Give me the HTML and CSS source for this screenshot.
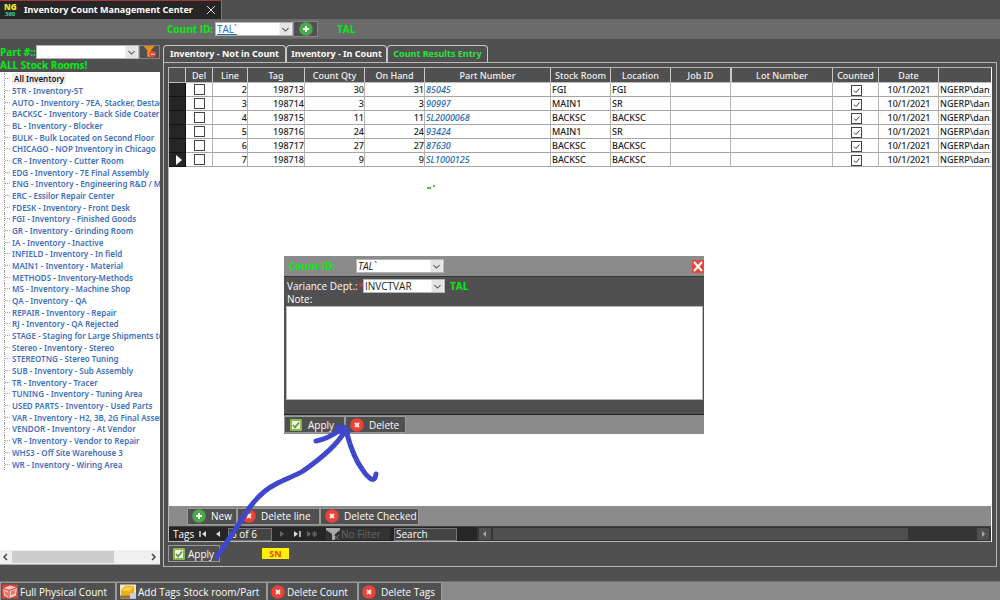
FILE: index.html
```html
<!DOCTYPE html>
<html lang="en">
<head>
<meta charset="utf-8">
<title>Inventory Count Management Center</title>
<link rel="stylesheet" href="styles.css">
</head>
<body>
<svg class="defs" aria-hidden="true">
  <symbol id="i-chev" viewBox="0 0 14 14"><path d="M0 0h14v14H0z" fill="#e4e4e4"/><path d="M3.500 6l3.500 3.500L10.500 6" fill="none" stroke="#555" stroke-width="1.200"/></symbol>
  <symbol id="i-plus" viewBox="0 0 14 14"><circle cx="7" cy="7" r="6.800" fill="#4aa84f"/><path d="M7 4v6M4 7h6" stroke="#eaffea" stroke-width="2"/></symbol>
  <symbol id="i-del" viewBox="0 0 14 14"><circle cx="7" cy="7" r="6.800" fill="#ea4438"/><path d="M5 5l4 4M9 5l-4 4" stroke="#ffe9e6" stroke-width="2"/></symbol>
  <symbol id="i-ok" viewBox="0 0 14 14"><rect x="1" y="1" width="12" height="12" rx="1" fill="#86b84c"/><rect x="3" y="3" width="8" height="8" fill="#eef6e2"/><path d="M4 7l2 2.500L10 4.500" fill="none" stroke="#5d9437" stroke-width="1.700"/></symbol>
  <symbol id="i-box" viewBox="0 0 16 14"><path d="M0 0h16v14H0z" fill="#d8463b"/><path d="M1 4l7-3 7 2-1 8-7 3-5-3z" fill="#f6c9c2"/><path d="M1 4l6 2 8-3M7 6v8" fill="none" stroke="#c23a31"/><path d="M2 6l4 2v4L3 10zM9 7l4-2v4l-4 2z" fill="#e4776c"/></symbol>
  <symbol id="i-tags" viewBox="0 0 16 14"><path d="M0 0h16v14H0z" fill="#efe6c4"/><path d="M1 6l5-5 8 1v7l-5 3-8-1z" fill="#f0ac12"/><path d="M2 6l5-4 6 1-4 4z" fill="#ffd04c"/><path d="M0 11h10v3H0z" fill="#8a7440"/><path d="M10 9l6-1v6h-6z" fill="#c9ced2"/></symbol>
</svg>
<div class="app">
  <header class="titlebar">
    <div class="doc-tab">
      <svg class="logo" viewBox="0 0 14 14" aria-hidden="true"><text class="logo-a" x="0" y="7">NG</text><text class="logo-b" x="1" y="13">360</text></svg>
      <span>Inventory Count Management Center</span>
      <button class="close" aria-label="Close tab"><svg viewBox="0 0 10 10"><path d="M1 1l8 8M9 1l-8 8" stroke="#ddd" fill="none"/></svg></button>
    </div>
  </header>

  <div class="count-bar">
    <label class="green" for="count">Count ID:</label>
    <div class="combo combo-count"><select id="count" class="linkish"><option>TAL`</option></select><svg><use href="#i-chev"/></svg></div>
    <button class="icon-btn" aria-label="Add count"><svg><use href="#i-plus"/></svg></button>
    <span class="green count-name">TAL</span>
  </div>

  <main class="work">
    <aside class="side">
      <div class="part-row">
        <label class="green" for="part">Part #::</label>
        <div class="combo combo-part"><select id="part"><option></option></select><svg><use href="#i-chev"/></svg></div>
        <button class="filter-btn" aria-label="Clear filter"><svg viewBox="0 0 14 13"><path d="M0 0h12L8 5v7H4V5z" fill="#ee8b14"/><circle cx="10" cy="9" r="3.500" fill="#e5443a"/><path d="M8 9h4" stroke="#fff"/></svg></button>
      </div>
      <div class="green rooms-title">ALL Stock Rooms!</div>
      <div class="tree">
        <ul>
          <li class="current"><span>All Inventory</span></li>
          <li>5TR - Inventory-5T</li>
          <li>AUTO - Inventory - 7EA, Stacker, Destac</li>
          <li>BACKSC - Inventory - Back Side Coater</li>
          <li>BL - Inventory - Blocker</li>
          <li>BULK - Bulk Located on Second Floor</li>
          <li>CHICAGO - NOP Inventory in Chicago</li>
          <li>CR - Inventory - Cutter Room</li>
          <li>EDG - Inventory - 7E Final Assembly</li>
          <li>ENG - Inventory - Engineering R&amp;D / M</li>
          <li>ERC - Essilor Repair Center</li>
          <li>FDESK - Inventory - Front Desk</li>
          <li>FGI - Inventory - Finished Goods</li>
          <li>GR - Inventory - Grinding Room</li>
          <li>IA - Inventory - Inactive</li>
          <li>INFIELD - Inventory - In field</li>
          <li>MAIN1 - Inventory - Material</li>
          <li>METHODS - Inventory-Methods</li>
          <li>MS - Inventory - Machine Shop</li>
          <li>QA - Inventory - QA</li>
          <li>REPAIR - Inventory - Repair</li>
          <li>RJ - Inventory - QA Rejected</li>
          <li>STAGE - Staging for Large Shipments to</li>
          <li>Stereo - Inventory - Stereo</li>
          <li>STEREOTNG - Stereo Tuning</li>
          <li>SUB - Inventory - Sub Assembly</li>
          <li>TR - Inventory - Tracer</li>
          <li>TUNING - Inventory - Tuning Area</li>
          <li>USED PARTS - Inventory - Used Parts</li>
          <li>VAR - Inventory - H2, 3B, 2G Final Assem</li>
          <li>VENDOR - Inventory - At Vendor</li>
          <li>VR - Inventory - Vendor to Repair</li>
          <li>WHS3 - Off Site Warehouse 3</li>
          <li>WR - Inventory - Wiring Area</li>
        </ul>
        <div class="hscroll">
          <svg viewBox="0 0 12 14"><path d="M7 4L4 7l3 3" fill="none" stroke="#444" stroke-width="1.500"/></svg>
          <div class="hthumb"></div>
          <svg viewBox="0 0 12 14"><path d="M4 4l3 3-3 3" fill="none" stroke="#444" stroke-width="1.500"/></svg>
        </div>
      </div>
    </aside>

    <section class="results">
      <nav class="tabs">
        <button class="tab-a">Inventory - Not in Count</button>
        <button class="tab-b">Inventory - In Count</button>
        <button class="tab-b active">Count Results Entry</button>
      </nav>
      <div class="panel">
        <div class="grid-box">
          <div class="sheet">
            <table>
              <colgroup><col class="w17"><col class="w27"><col class="w35"><col class="w57"><col class="w60"><col class="w60"><col><col class="w60"><col class="w60"><col class="w60"><col class="w102"><col class="w46"><col class="w60"><col class="w52"></colgroup>
              <thead><tr><th></th><th>Del</th><th>Line</th><th>Tag</th><th>Count Qty</th><th>On Hand</th><th>Part Number</th><th>Stock Room</th><th>Location</th><th>Job ID</th><th class="dbl">Lot Number</th><th>Counted</th><th>Date</th><th></th></tr></thead>
              <tbody>
                <tr><td class="sel"></td><td class="c"><input type="checkbox" aria-label="Delete line 2"></td><td class="n">2</td><td class="n">198713</td><td class="n">30</td><td class="n">31</td><td class="part">85045</td><td>FGI</td><td>FGI</td><td></td><td></td><td class="c low"><input type="checkbox" checked aria-label="Counted line 2"></td><td class="c">10/1/2021</td><td>NGERP\dan</td></tr>
                <tr><td class="sel"></td><td class="c"><input type="checkbox" aria-label="Delete line 3"></td><td class="n">3</td><td class="n">198714</td><td class="n">3</td><td class="n">3</td><td class="part">90997</td><td>MAIN1</td><td>SR</td><td></td><td></td><td class="c low"><input type="checkbox" checked aria-label="Counted line 3"></td><td class="c">10/1/2021</td><td>NGERP\dan</td></tr>
                <tr><td class="sel"></td><td class="c"><input type="checkbox" aria-label="Delete line 4"></td><td class="n">4</td><td class="n">198715</td><td class="n">11</td><td class="n">11</td><td class="part">SL2000068</td><td>BACKSC</td><td>BACKSC</td><td></td><td></td><td class="c low"><input type="checkbox" checked aria-label="Counted line 4"></td><td class="c">10/1/2021</td><td>NGERP\dan</td></tr>
                <tr><td class="sel"></td><td class="c"><input type="checkbox" aria-label="Delete line 5"></td><td class="n">5</td><td class="n">198716</td><td class="n">24</td><td class="n">24</td><td class="part">93424</td><td>MAIN1</td><td>SR</td><td></td><td></td><td class="c low"><input type="checkbox" checked aria-label="Counted line 5"></td><td class="c">10/1/2021</td><td>NGERP\dan</td></tr>
                <tr><td class="sel"></td><td class="c"><input type="checkbox" aria-label="Delete line 6"></td><td class="n">6</td><td class="n">198717</td><td class="n">27</td><td class="n">27</td><td class="part">87630</td><td>BACKSC</td><td>BACKSC</td><td></td><td></td><td class="c low"><input type="checkbox" checked aria-label="Counted line 6"></td><td class="c">10/1/2021</td><td>NGERP\dan</td></tr>
                <tr><td class="sel"><svg class="ptr" viewBox="0 0 6 10"><path d="M0 0l6 5-6 5z" fill="#fff"/></svg></td><td class="c"><input type="checkbox" aria-label="Delete line 7"></td><td class="n">7</td><td class="n">198718</td><td class="n">9</td><td class="n">9</td><td class="part">SL1000125</td><td>BACKSC</td><td>BACKSC</td><td></td><td></td><td class="c low"><input type="checkbox" checked aria-label="Counted line 7"></td><td class="c">10/1/2021</td><td>NGERP\dan</td></tr>
              </tbody>
            </table>
          </div>
          <div class="actions">
            <button class="btn b-new"><svg><use href="#i-plus"/></svg>New</button>
            <button class="btn b-line"><svg><use href="#i-del"/></svg>Delete line</button>
            <button class="btn b-checked"><svg><use href="#i-del"/></svg>Delete Checked</button>
          </div>
          <div class="recnav">
            <span class="tags-label">Tags</span>
            <button aria-label="First"><svg viewBox="0 0 10 8"><path d="M2 1v6" stroke="#ddd" stroke-width="1.500"/><path d="M8 1v6L4 4z" fill="#ddd"/></svg></button>
            <button aria-label="Previous"><svg viewBox="0 0 10 8"><path d="M7 1v6L3 4z" fill="#ddd"/></svg></button>
            <input class="pos" aria-label="Record" value="6 of 6">
            <button aria-label="Next"><svg viewBox="0 0 10 8"><path d="M3 1v6l4-3z" fill="#666"/></svg></button>
            <button aria-label="Last"><svg viewBox="0 0 10 8"><path d="M8 1v6" stroke="#ddd" stroke-width="1.500"/><path d="M2 1v6l4-3z" fill="#ddd"/></svg></button>
            <button aria-label="New record"><svg viewBox="0 0 10 8"><path d="M0 1v6l4-3z" fill="#666"/><path d="M7.500 1v6M5 4h5M5.500 2l4 4M9.500 2l-4 4" stroke="#666"/></svg></button>
            <button class="nofilter"><svg viewBox="0 0 14 12"><path d="M0 0h14v2L9 6v6H6V6L0 2z" fill="#aaa"/><path d="M8 7l5 5M13 7l-5 5" stroke="#777"/></svg>No Filter</button>
            <input class="search" aria-label="Search" value="Search">
            <div class="nav-scroll">
              <svg viewBox="0 0 12 12"><path d="M0 0h12v12H0z" fill="#505050"/><path d="M7 3v6L4 6z" fill="#aaa"/></svg>
              <div class="nav-track"><div class="nav-thumb"></div></div>
              <svg viewBox="0 0 12 12"><path d="M0 0h12v12H0z" fill="#505050"/><path d="M5 3v6l3-3z" fill="#aaa"/></svg>
            </div>
          </div>
        </div>
        <div class="panel-foot">
          <button class="btn b-apply"><svg><use href="#i-ok"/></svg>Apply</button>
          <span class="sn">SN</span>
        </div>
      </div>
    </section>
  </main>

  <footer class="bottom">
    <button class="btn b-full"><svg><use href="#i-box"/></svg>Full Physical Count</button>
    <button class="btn b-add"><svg><use href="#i-tags"/></svg><span>Add Tags</span><span>Stock room/Part</span></button>
    <button class="btn b-delc"><svg><use href="#i-del"/></svg>Delete Count</button>
    <button class="btn b-delt"><svg><use href="#i-del"/></svg>Delete Tags</button>
  </footer>

  <div class="dialog" role="dialog" aria-label="Count">
    <div class="dlg-head">
      <label class="green" for="dcount">Count ID:</label>
      <div class="combo combo-dlg"><select id="dcount" class="ital"><option>TAL`</option></select><svg><use href="#i-chev"/></svg></div>
      <button class="dlg-close" aria-label="Close"><svg viewBox="0 0 12 13"><path d="M2 2l8 9M10 2l-8 9" stroke="#fff" stroke-width="2" fill="none"/></svg></button>
    </div>
    <div class="dlg-body">
      <div class="dlg-row">
        <label for="dept">Variance Dept.:</label><span class="req">*</span>
        <div class="combo combo-dept"><select id="dept"><option>INVCTVAR</option></select><svg><use href="#i-chev"/></svg></div>
        <span class="green">TAL</span>
      </div>
      <label class="note-label" for="note">Note:</label>
      <textarea id="note"></textarea>
    </div>
    <div class="dlg-foot">
      <button class="btn b-dapply"><svg><use href="#i-ok"/></svg>Apply</button>
      <button class="btn b-ddel"><svg><use href="#i-del"/></svg>Delete</button>
    </div>
  </div>

  <svg class="ink" viewBox="0 0 1000 600" aria-hidden="true">
    <path d="M217 557L250 507C258 496 266 489 276 484C285 479 295 476 303 471C316 462 336 447 345 431M316 441C325 440 333 435 342 429L347 434C350 445 354 458 362 469C367 477 373 482 375 478L376 474"/>
    <path class="head" d="M337 428l7-1 4 5-6 1z"/>
    <path class="speck" d="M427 187h4v2h-4zM433 185h2v2h-2z"/>
  </svg>
</div>
</body>
</html>
```
FILE: styles.css
```css
* { box-sizing: border-box; }
body { margin: 0; background: #505050; color: #fff; font: 500 10px/12px "Open Sans", "Noto Sans", sans-serif; }
button, input, select, textarea { font: inherit; color: inherit; margin: 0; padding: 0; border: 0; border-radius: 0; background: none; outline: 0; }
svg { display: block; flex: none; }
.defs { position: absolute; width: 0; height: 0; }
.app { position: relative; display: flex; flex-direction: column; min-height: 100vh; overflow: hidden; }
.green { color: #04ee10; font-weight: 700; font-size: 10px; white-space: nowrap; }

.titlebar { display: flex; height: 19px; background: #4e4e4e; }
.doc-tab { display: flex; align-items: center; width: 222px; padding-left: 4px; gap: 6px; background: #262626; border-top: 1px solid #a33a42; border-right: 1px solid #777; font: 700 9px/12px "Noto Sans", sans-serif; white-space: nowrap; }
.logo { width: 14px; height: 14px; overflow: visible; }
.logo-a { font: 900 8px "Noto Sans", sans-serif; fill: #f5ea1c; }
.logo-b { font: 700 6px "Noto Sans", sans-serif; fill: #3fd0a0; }
.close { margin-left: auto; margin-right: 5px; }
.close svg { width: 10px; height: 10px; }

.count-bar { display: flex; align-items: center; height: 20px; padding-left: 167px; background: #6b6b6b; }
.count-bar label { width: 48px; }
.icon-btn { display: grid; place-items: center; width: 25px; height: 16px; background: #505050; border: 1px solid #858585; }
.icon-btn svg { width: 14px; height: 14px; }
.count-name { margin-left: 19px; }

.combo { display: grid; grid-template-columns: 1fr; height: 14px; border: 1px solid #b5b5b5; background: #fff; color: #222; }
.combo > * { grid-area: 1 / 1; }
.combo select { appearance: none; width: 100%; height: 12px; padding-left: 1px; line-height: 12px; }
.combo svg { justify-self: end; width: 13px; height: 12px; pointer-events: none; }
.combo-count { width: 78px; }
.combo .linkish { color: #2468b4; text-decoration: underline; }
.combo .ital { font-style: italic; }

.work { flex: 1; display: flex; padding: 6px 3px 14px 0; }
.side { width: 160px; display: flex; flex-direction: column; }
.part-row { display: flex; align-items: center; height: 14px; }
.part-row label { width: 36px; }
.combo-part { flex: 1; }
.filter-btn { width: 21px; height: 14px; padding-left: 3px; border: 1px solid #858585; }
.filter-btn svg { width: 14px; height: 12px; }
.rooms-title { line-height: 13px; }
.tree { flex: 1; display: flex; flex-direction: column; min-height: 0; margin-bottom: 2px; background: #fff; border-bottom: 1px solid #aaa; }
.tree ul { flex: 1; display: flex; flex-direction: column; margin: 0; padding: 1px 0 80px; list-style: none; min-height: 0; }
.tree li { flex: 1; display: flex; align-items: center; min-height: 0; margin-left: 4px; padding-left: 7px; overflow: hidden; white-space: nowrap; color: #416ebd; font: 600 8px/11px "Noto Sans", sans-serif; border-left: 1px dotted #999; background: repeating-linear-gradient(90deg, #aaa 0 1px, transparent 1px 2px) 0 50% / 6px 1px no-repeat; }
.tree .current { color: #111; }
.current span { padding: 0 2px; background: #eee; }
.hscroll { display: flex; align-items: center; height: 14px; background: #f0f0f0; }
.hscroll svg { width: 12px; height: 14px; }
.hscroll svg:last-child { margin-left: auto; }
.hthumb { width: 64%; height: 12px; background: #cdcdcd; }

.results { flex: 1; min-width: 0; display: flex; flex-direction: column; margin-left: 3px; }
.tabs { display: flex; height: 17px; }
.tabs button { height: 17px; border: 1px solid #c8c8c8; border-bottom: 0; border-radius: 4px 4px 0 0; font: 700 9px/14px "Noto Sans", sans-serif; white-space: nowrap; }
.tabs .tab-a { width: 123px; }
.tabs .tab-b { width: 101px; }
.tabs .active { color: #27e63c; }
.panel { flex: 1; display: flex; flex-direction: column; padding: 4px; border: 1px solid #b8b8b8; }
.grid-box { flex: 1; display: flex; flex-direction: column; border: 1px solid #b8b8b8; border-right-color: #fff; }
.sheet { flex: 1; background: #fff; overflow: hidden; }
table { width: 100%; table-layout: fixed; border-collapse: separate; border-spacing: 0; color: #222; font: 500 9px/13px "Noto Sans", sans-serif; }
.w17 { width: 17px; } .w27 { width: 27px; } .w35 { width: 35px; } .w46 { width: 46px; } .w52 { width: 52px; } .w57 { width: 57px; } .w60 { width: 60px; } .w102 { width: 102px; }
th { height: 15px; padding: 0; background: #505050; color: #f0f0f0; font-weight: 500; line-height: 13px; border-right: 1px solid #c8c8c8; border-bottom: 1px solid #bbb; white-space: nowrap; }
th.dbl { border-left: 1px solid #c8c8c8; }
td { height: 14px; padding: 0 0 0 1px; line-height: 13px; border-right: 1px solid #b5b5b5; border-bottom: 1px solid #a5a5a5; white-space: nowrap; overflow: hidden; }
th:last-child, td:last-child { border-right: 0; }
td.n { text-align: right; }
td.c { text-align: center; }
td.sel { background: #262626; border-color: #111; }
td.part { color: #2468b4; font-style: italic; }
.ptr { width: 6px; height: 10px; margin-left: 6px; }
td input { appearance: none; display: block; width: 11px; height: 11px; margin: 0 auto; border: 1px solid #444; background: #fff; }
td.low input { margin-top: 2px; }
td input:checked { background: url("data:image/svg+xml,%3Csvg xmlns='http://www.w3.org/2000/svg' viewBox='0 0 9 9'%3E%3Cpath d='M2 4.500l2 2L7.500 2.500' fill='none' stroke='%23333'/%3E%3C/svg%3E") #fff; }

.btn { display: flex; align-items: center; gap: 5px; height: 17px; padding: 0 4px; background: #505050; border: 1px solid #9a9a9a; font-size: 10px; white-space: nowrap; }
.btn svg { width: 14px; height: 14px; }
.actions { display: flex; align-items: center; height: 20px; padding-left: 18px; background: #8b8b8b; }
.b-new { width: 50px; }
.b-line { width: 83px; }
.b-checked { width: 99px; }
.recnav { display: flex; align-items: center; height: 15px; padding-left: 4px; background: #262626; border-top: 1px solid #404040; }
.tags-label { width: 25px; }
.recnav button { width: 15px; }
.recnav button svg { width: 10px; height: 8px; }
.recnav input { height: 13px; background: #444; border: 1px solid #777; }
.recnav .pos { width: 44px; margin-right: 5px; padding-left: 2px; }
.recnav .nofilter { display: flex; align-items: center; gap: 1px; width: 64px; margin-left: 4px; color: #666; background: #333; white-space: nowrap; }
.recnav .nofilter svg { width: 14px; height: 12px; }
.recnav .search { width: 63px; margin-left: 4px; padding-left: 1px; }
.nav-scroll { flex: 1; display: flex; align-items: center; gap: 2px; height: 14px; margin-left: 20px; padding: 0 2px; background: #363636; }
.nav-scroll svg { width: 12px; height: 12px; }
.nav-track { flex: 1; }
.nav-thumb { width: 86%; height: 12px; background: #505050; }
.panel-foot { display: flex; align-items: center; height: 20px; padding-top: 3px; }
.b-apply { width: 52px; padding: 0 3px; gap: 2px; }
.sn { margin-left: 42px; width: 27px; height: 11px; background: #fff200; color: #e8442a; font-weight: 700; font-size: 9px; line-height: 11px; text-align: center; }

.bottom { display: flex; height: 19px; background: #8b8b8b; border-top: 1px solid #707070; }
.bottom .btn { height: 18px; gap: 2px; padding: 0 3px; border-bottom: 0; }
.bottom .b-full svg, .bottom .b-add svg { width: 16px; height: 15px; }
.b-full { width: 116px; }
.bottom .b-full { padding-left: 1px; }
.b-add { width: 151px; }
.b-add span + span { margin-left: 1px; }
.b-delc { width: 91px; }
.bottom .b-delt { width: 84px; gap: 5px; }

.dialog { position: absolute; left: 284px; top: 256px; width: 420px; background: #505050; }
.dlg-head { display: flex; align-items: center; height: 21px; padding-left: 5px; background: #8b8b8b; border-bottom: 1px solid #333; }
.dlg-head label { width: 67px; }
.combo-dlg { width: 88px; }
.dlg-close { margin-left: auto; width: 12px; height: 13px; background: #e5483b; }
.dlg-close svg { width: 12px; height: 13px; }
.dlg-body { padding: 2px 1px 14px 2px; border-bottom: 1px solid #222; }
.dlg-row { display: flex; align-items: center; height: 14px; padding-left: 1px; }
.dlg-row label { width: 71px; white-space: nowrap; }
.req { width: 5px; color: #e33; }
.combo-dept { width: 82px; margin-right: 5px; }
.note-label { display: block; height: 13px; padding-left: 1px; line-height: 12px; }
textarea { display: block; width: 100%; height: 94px; background: #fff; border: 1px solid #b5b5b5; color: #222; resize: none; }
.dlg-foot { display: flex; align-items: center; height: 19px; background: #8b8b8b; }
.b-dapply { width: 61px; }
.b-ddel { width: 61px; }

.ink { position: absolute; left: 0; top: 0; width: 1000px; height: 600px; pointer-events: none; }
.ink path { fill: none; stroke: #3f48cc; stroke-width: 5; stroke-linecap: round; stroke-linejoin: round; }
.ink .head { fill: #3f48cc; }
.ink .speck { fill: #3fd32c; stroke: none; }
```
